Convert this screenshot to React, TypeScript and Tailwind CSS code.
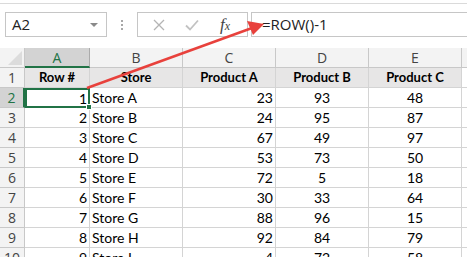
import React from "react";

const data: (string | number)[][] = [
  [1, "Store A", 23, 93, 48],
  [2, "Store B", 24, 95, 87],
  [3, "Store C", 67, 49, 97],
  [4, "Store D", 53, 73, 50],
  [5, "Store E", 72, 5, 18],
  [6, "Store F", 30, 33, 64],
  [7, "Store G", 88, 96, 15],
  [8, "Store H", 92, 84, 79],
  [9, "Store I", 4, 72, 58],
];

const cols = ["A", "B", "C", "D", "E"];
const heads = ["Row #", "Store", "Product A", "Product B", "Product C"];
const gridCols = "grid grid-cols-[25px_65px_93px_93px_93px_93px_1fr]";

function App() {
  return (
    <div className="relative w-[467px] h-[257px] overflow-hidden bg-white font-['Lato',sans-serif] text-black">
      <div className="h-[3px]" />
      <div className="h-px bg-[#dadada]" />
      {/* formula bar row */}
      <div className="mt-[8px] flex h-[25px] items-stretch">
        <div className="ml-[5px] w-[102px] border border-[#c6c6c6] flex items-center justify-between pl-[6px] pr-[8px] font-['Open_Sans',sans-serif] text-[15px] text-[#222]">
          <span>A2</span>
          <span className="w-0 h-0 border-l-[4px] border-r-[4px] border-t-[4px] border-l-transparent border-r-transparent border-t-[#8a8a8a]" />
        </div>
        <div className="w-[30px] flex flex-col items-center justify-center gap-[2px]">
          <span className="w-[2px] h-[2px] bg-[#a8a8a8]" />
          <span className="w-[2px] h-[2px] bg-[#a8a8a8]" />
          <span className="w-[2px] h-[2px] bg-[#a8a8a8]" />
        </div>
        <div className="w-[111px] border border-[#c6c6c6] flex items-center">
          <svg width="12" height="12" viewBox="0 0 12 12" className="ml-[15px]">
            <path d="M1 1L11 11M11 1L1 11" stroke="#b4b4b4" strokeWidth="1.3" />
          </svg>
          <svg width="14" height="12" viewBox="0 0 14 12" className="ml-[20px]">
            <path d="M1 6.5L5 10.5L13 1.5" stroke="#c2c2c2" strokeWidth="1.8" fill="none" />
          </svg>
          <span className="ml-[21px] font-['Liberation_Serif',serif] italic text-[17px] text-[#444] leading-none">
            f<span className="text-[12px]">x</span>
          </span>
        </div>
        <div className="ml-[3px] flex-1 border border-r-0 border-[#c6c6c6] flex items-center pl-[10px] font-['Open_Sans',sans-serif] text-[15px] text-[#222]">
          =ROW()-1
        </div>
      </div>

      {/* sheet */}
      <div className={`mt-[11px] ${gridCols} auto-rows-[20px] text-[14px]`}>
        <div className="bg-[#f3f3f3] border-r border-b border-[#c8c8c8] relative">
          <svg width="14" height="14" className="absolute right-[2px] bottom-[2px]" viewBox="0 0 14 14">
            <path d="M14 0L14 14L0 14Z" fill="#dcdcdc" />
          </svg>
        </div>
        {cols.map((c, i) => (
          <div
            key={c}
            className={
              i === 0
                ? "bg-[#d3d3d3] border-r border-[#ababab] border-b-2 border-b-[#217346] text-[#217346] flex items-center justify-center font-['Open_Sans',sans-serif] text-[14px]"
                : "bg-[#f3f3f3] border-r border-b border-[#c8c8c8] text-[#444] flex items-center justify-center font-['Open_Sans',sans-serif] text-[14px]"
            }
          >
            {c}
          </div>
        ))}
        <div className="bg-[#f3f3f3] border-b border-[#c8c8c8]" />

        {/* row 1 headings */}
        <div className="bg-[#f3f3f3] border-r border-b border-[#c8c8c8] text-[#444] flex items-center justify-center font-['Open_Sans',sans-serif] text-[14px]">1</div>
        {heads.map((h) => (
          <div key={h} className="bg-[#e7e6e6] border-r border-b border-[#d4d4d4] font-bold text-[13px] flex items-center justify-center">
            {h}
          </div>
        ))}
        <div className="border-b border-[#d4d4d4]" />

        {data.map((r, ri) => {
          const sel = ri === 0;
          return (
            <React.Fragment key={ri}>
              <div
                className={
                  sel
                    ? "bg-[#d3d3d3] border-r-2 border-r-[#217346] border-b border-b-[#c8c8c8] text-[#217346] flex items-center justify-center font-['Open_Sans',sans-serif] text-[14px]"
                    : "bg-[#f3f3f3] border-r border-b border-[#c8c8c8] text-[#444] flex items-center justify-center font-['Open_Sans',sans-serif] text-[14px]"
                }
              >
                {ri + 2}
              </div>
              <div
                className={
                  sel
                    ? "relative border-2 border-[#217346] flex items-center justify-end pr-[1px]"
                    : "border-r border-b border-[#d4d4d4] flex items-center justify-end pr-[2px]"
                }
              >
                {r[0]}
                {sel && <span className="absolute right-[-4px] bottom-[-4px] w-[6px] h-[6px] bg-[#217346] border border-white" />}
              </div>
              <div className="border-r border-b border-[#d4d4d4] flex items-center pl-[2px]">{r[1]}</div>
              <div className="border-r border-b border-[#d4d4d4] flex items-center justify-end pr-[2px]">{r[2]}</div>
              <div className="border-r border-b border-[#d4d4d4] flex items-center justify-center">{r[3]}</div>
              <div className="border-r border-b border-[#d4d4d4] flex items-center justify-center">{r[4]}</div>
              <div className="border-b border-[#d4d4d4]" />
            </React.Fragment>
          );
        })}
      </div>

      {/* red arrow overlay */}
      <svg className="absolute left-0 top-0 pointer-events-none" width="467" height="257" viewBox="0 0 467 257">
        <line x1="87" y1="88" x2="252" y2="28" stroke="#e8413c" strokeWidth="2.5" />
        <path d="M264 24L247 21L253 35Z" fill="#e8413c" />
      </svg>
    </div>
  );
}

export default App;
